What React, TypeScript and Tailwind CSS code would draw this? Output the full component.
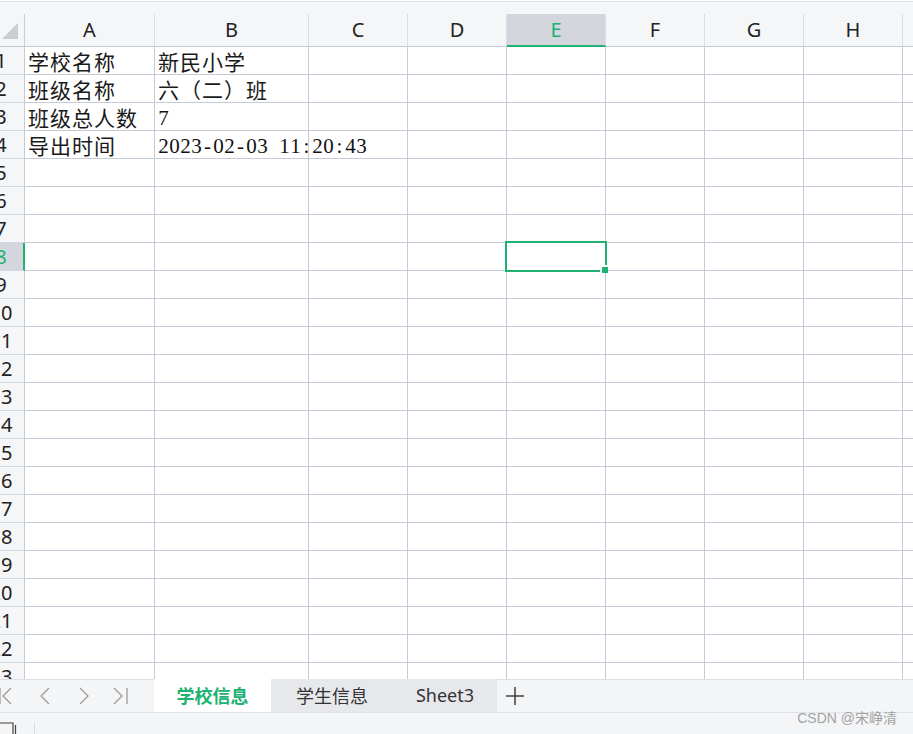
import React from "react";

const cols = [
  { l: "A", w: 130 },
  { l: "B", w: 154 },
  { l: "C", w: 99 },
  { l: "D", w: 99 },
  { l: "E", w: 99 },
  { l: "F", w: 99 },
  { l: "G", w: 99 },
  { l: "H", w: 99 },
  { l: "", w: 99 },
];

type Cell = { a?: string; b?: string; bSerif?: boolean };
const data: Record<number, Cell> = {
  1: { a: "学校名称", b: "新民小学" },
  2: { a: "班级名称", b: "六（二）班" },
  3: { a: "班级总人数", b: "7", bSerif: true },
  4: { a: "导出时间", b: "2023-02-03 11:20:43", bSerif: true },
};

function SerifFixed({ text }: { text: string }) {
  return (
    <span className="flex mt-[4px] font-['Liberation_Serif',serif] text-[21px] text-[#111]">
      {text.split("").map((ch, i) => (
        <span key={i} className="inline-block w-[11px] text-center">
          {ch === " " ? "\u00a0" : ch}
        </span>
      ))}
    </span>
  );
}

function CjkText({ text }: { text: string }) {
  return (
    <span className="mt-[2px] font-['Noto_Sans_CJK_SC',sans-serif] text-[21px] tracking-[1px] text-[#1a1a1a] whitespace-nowrap">
      {text}
    </span>
  );
}

function Row({ n }: { n: number }) {
  const sel = n === 8;
  const d = data[n];
  return (
    <div className="flex h-[28px] shrink-0">
      <div
        className={
          "w-[25px] shrink-0 overflow-hidden border-b border-[#d3d7e0] flex items-center " +
          (sel
            ? "bg-[#d3d6dc] border-r-2 border-r-[#20b273]"
            : "bg-[#f5f6f8] border-r border-r-[#c5cad7]")
        }
      >
        <div
          className={
            "w-[48px] ml-[-23px] shrink-0 text-center font-['Noto_Sans',sans-serif] text-[20px] leading-none " +
            (sel ? "text-[#20b273]" : "text-[#222]")
          }
        >
          {n}
        </div>
      </div>
      {cols.map((c, i) => (
        <div
          key={i}
          style={{ width: c.w }}
          className="shrink-0 border-r border-b border-[#c5cad7] flex items-center pl-[3px] overflow-visible whitespace-nowrap"
        >
          {i === 0 && d?.a ? <CjkText text={d.a} /> : null}
          {i === 1 && d?.b ? (
            d.bSerif ? <SerifFixed text={d.b} /> : <CjkText text={d.b} />
          ) : null}
        </div>
      ))}
    </div>
  );
}

function Chevron({ dir }: { dir: "first" | "prev" | "next" | "last" }) {
  return (
    <svg width="16" height="20" viewBox="0 0 16 20" fill="none" stroke="#9b9b9b" strokeWidth="1.3">
      {dir === "first" && (
        <>
          <line x1="1" y1="2" x2="1" y2="18" />
          <polyline points="12,2 4,10 12,18" />
        </>
      )}
      {dir === "prev" && <polyline points="12,2 4,10 12,18" />}
      {dir === "next" && <polyline points="4,2 12,10 4,18" />}
      {dir === "last" && (
        <>
          <polyline points="2,2 10,10 2,18" />
          <line x1="15" y1="2" x2="15" y2="18" />
        </>
      )}
    </svg>
  );
}

export default function App() {
  const rows = Array.from({ length: 23 }, (_, i) => i + 1);
  return (
    <div className="w-[913px] h-[734px] overflow-hidden bg-white flex flex-col relative font-['Noto_Sans',sans-serif]">
      {/* top strip */}
      <div className="h-px bg-white shrink-0" />
      <div className="h-px bg-[#dcdfe4] shrink-0" />
      <div className="h-[12px] bg-[#f5f6f8] shrink-0" />

      {/* grid */}
      <div className="h-[665px] shrink-0 overflow-hidden relative">
        <div className="flex h-[33px] shrink-0 bg-[#f5f6f8]">
          <div className="w-[25px] shrink-0 border-r border-r-[#c9cdd6] border-b border-b-[#c3c8d4] relative">
            <svg className="absolute left-[2px] top-[9px]" width="16" height="16" viewBox="0 0 16 16">
              <polygon points="16,0 16,16 0,16" fill="#c9ccd1" />
            </svg>
          </div>
          {cols.map((c, i) => {
            const sel = c.l === "E";
            return (
              <div
                key={i}
                style={{ width: c.w }}
                className={
                  "shrink-0 border-r border-r-[#d9dde4] flex items-center justify-center font-['Noto_Sans',sans-serif] text-[20px] " +
                  (sel
                    ? "bg-[#d3d6dc] text-[#20b273] border-b-2 border-b-[#20b273]"
                    : "text-[#222] border-b border-b-[#c3c8d4]")
                }
              >
                {c.l}
              </div>
            );
          })}
        </div>
        {rows.map((n) => (
          <Row key={n} n={n} />
        ))}

        {/* selection */}
        <div className="absolute left-[505px] top-[227px] w-[102px] h-[31px] border-2 border-[#20b273]" />
        <div className="absolute left-[600px] top-[251px] w-[8px] h-[8px] bg-[#20b273] border-l-2 border-t-2 border-white" />
      </div>

      {/* tab bar */}
      <div className="h-[33px] shrink-0 flex bg-[#f4f5f7]">
        <div className="w-[154px] shrink-0 border-t border-[#dcdfe4] flex items-center">
          <div className="ml-[-1px]"><Chevron dir="first" /></div>
          <div className="ml-[22px]"><Chevron dir="prev" /></div>
          <div className="ml-[23px]"><Chevron dir="next" /></div>
          <div className="ml-[20px]"><Chevron dir="last" /></div>
        </div>
        <div className="w-[117px] shrink-0 bg-white flex items-center justify-center font-['Noto_Sans_CJK_SC',sans-serif] text-[18px] font-bold text-[#20b273]">
          学校信息
        </div>
        <div className="w-[226px] shrink-0 bg-[#e7e8ec] flex items-center text-[18px] text-[#333]">
          <div className="w-[122px] text-center font-['Noto_Sans_CJK_SC',sans-serif]">学生信息</div>
          <div className="w-[104px] text-center font-['Noto_Sans',sans-serif]">Sheet3</div>
        </div>
        <div className="flex-1 border-t border-[#dcdfe4] flex items-center">
          <svg className="ml-[8px]" width="20" height="20" viewBox="0 0 20 20" stroke="#333" strokeWidth="1.4">
            <line x1="10" y1="1" x2="10" y2="19" />
            <line x1="1" y1="10" x2="19" y2="10" />
          </svg>
        </div>
      </div>

      {/* status bar */}
      <div className="h-[22px] shrink-0 bg-[#f4f5f7] border-t border-[#dfe2e6] relative flex items-end">
        <svg className="absolute left-0 top-[9px]" width="18" height="13" viewBox="0 0 18 13" fill="none" stroke="#444" strokeWidth="1.2">
          <polyline points="0,1 13,1 13,13" />
          <line x1="15.5" y1="3" x2="15.5" y2="13" />
        </svg>
        <div className="absolute left-[34px] top-[9px] w-px h-[13px] bg-[#d9dce1]" />
        <div className="absolute right-[16px] top-[-4px] text-[14px] leading-[18px] text-[#a3a3a3] font-['Liberation_Sans','Noto_Sans_CJK_SC',sans-serif]">
          CSDN @宋峥清
        </div>
      </div>
    </div>
  );
}
